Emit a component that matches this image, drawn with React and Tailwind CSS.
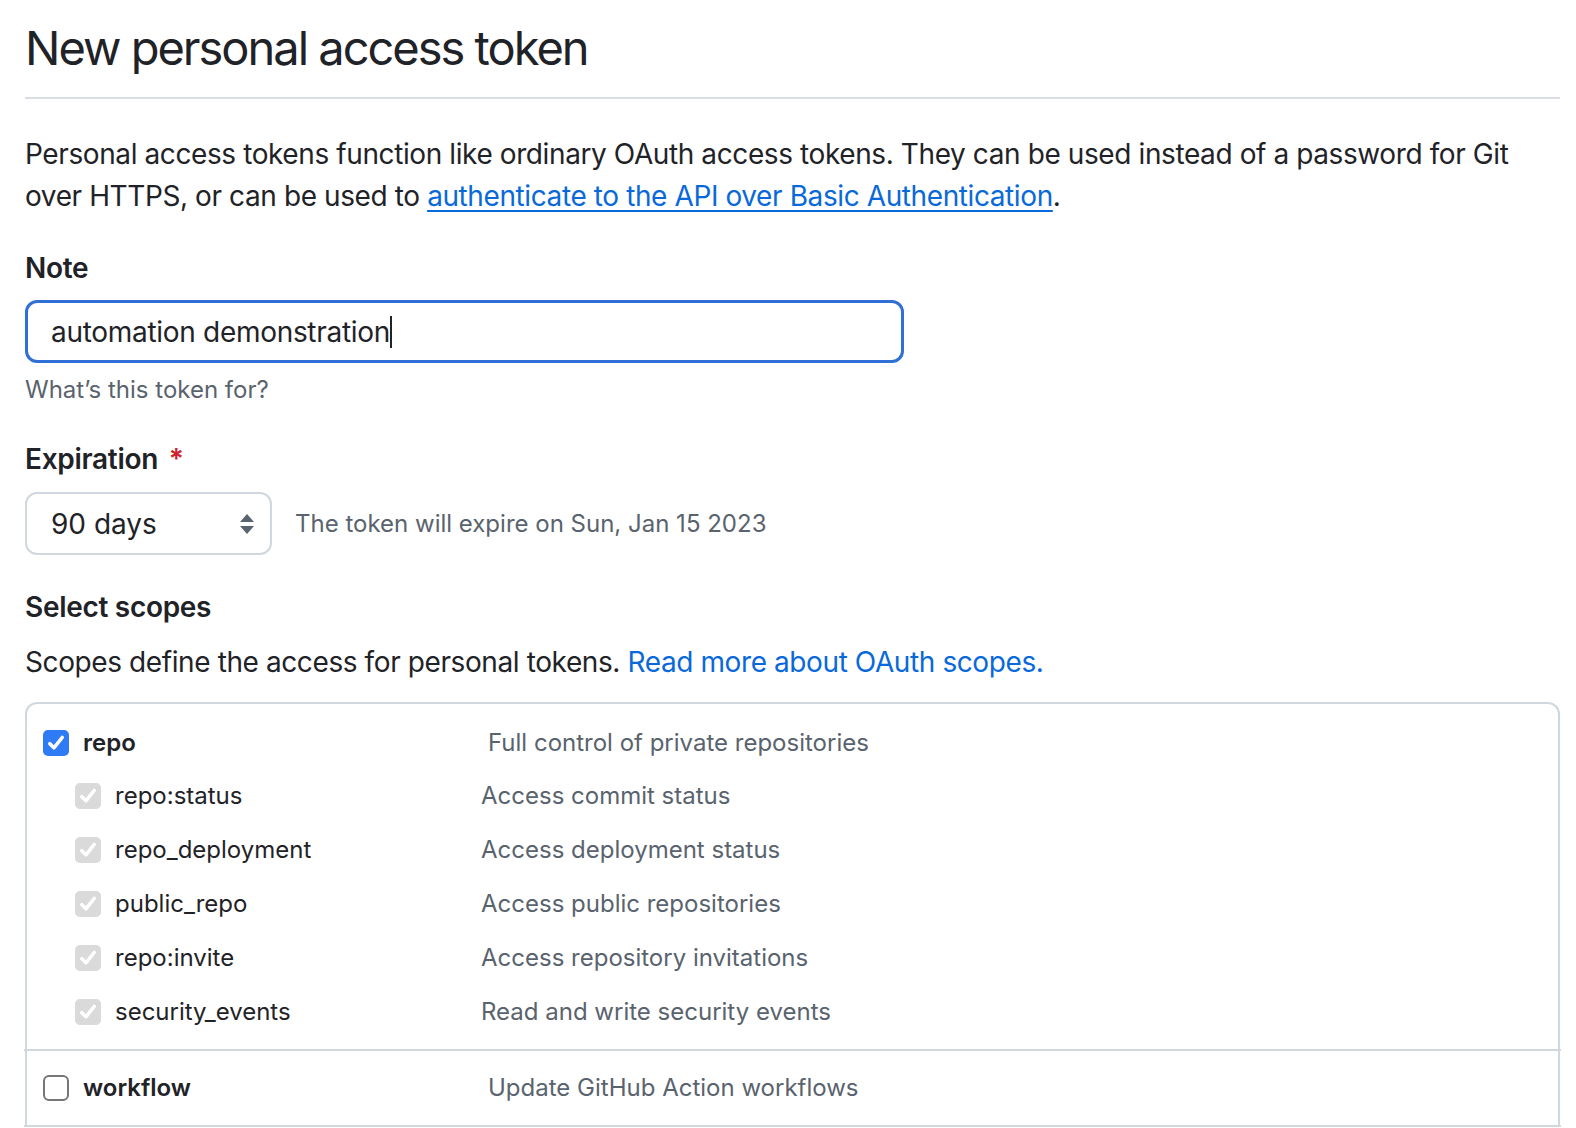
import React from "react";

const scopes = [
  { name: "repo:status", desc: "Access commit status" },
  { name: "repo_deployment", desc: "Access deployment status" },
  { name: "public_repo", desc: "Access public repositories" },
  { name: "repo:invite", desc: "Access repository invitations" },
  { name: "security_events", desc: "Read and write security events" },
];

function CheckMark({ className }) {
  return (
    <svg viewBox="0 0 16 16" className={className} fill="none">
      <path
        d="M3.5 8.5l3 3 6-7.5"
        stroke="currentColor"
        strokeWidth="2.6"
        strokeLinecap="round"
        strokeLinejoin="round"
      />
    </svg>
  );
}

export default function App() {
  return (
    <div
      className="w-full min-h-[1128px] bg-white text-[#1f2328] pl-[25px] pr-[16px] pt-[18px]"
      style={{ fontFamily: "Inter, 'Noto Sans', sans-serif" }}
    >
      <div className="border-b-2 border-[#d8dee4] pb-[19px]">
        <h1 className="text-[47px] leading-[60px] font-normal tracking-[-2px]">
          New personal access token
        </h1>
      </div>

      <p className="mt-[34px] text-[28px] leading-[42px] tracking-[-0.4px]">
        Personal access tokens function like ordinary OAuth access tokens. They can be used instead of a password for Git
        over HTTPS, or can be used to{" "}
        <a href="#" className="text-[#0969da] underline underline-offset-[4px]">
          authenticate to the API over Basic Authentication
        </a>
        .
      </p>

      <div className="mt-[30px] text-[28px] leading-[42px] font-semibold tracking-[-0.3px]">Note</div>
      <div className="mt-[11px] w-[879px] h-[63px] rounded-[12px] border-[3px] border-[#2f6fd6] flex items-center pl-[23px] text-[28px] tracking-[-0.3px]">
        <span>automation demonstration</span>
        <span className="inline-block w-[2px] h-[32px] bg-[#1f2328]" />
      </div>
      <div className="mt-[9px] text-[24px] leading-[36px] text-[#59636e]">What’s this token for?</div>

      <div className="mt-[30px] text-[28px] leading-[42px] font-semibold tracking-[-0.3px]">
        Expiration <span className="text-[#cf222e] ml-[4px]">*</span>
      </div>
      <div className="mt-[12px] flex items-center">
        <div className="w-[247px] h-[63px] rounded-[12px] border-2 border-[#d0d7de] flex items-center justify-between pl-[24px] pr-[16px] text-[28px]">
          <span>90 days</span>
          <svg viewBox="0 0 14 20" className="w-[14px] h-[20px]">
            <path d="M7 0L14 8H0z" fill="#59636e" />
            <path d="M7 20L14 12H0z" fill="#59636e" />
          </svg>
        </div>
        <div className="ml-[23px] text-[24px] text-[#59636e]">The token will expire on Sun, Jan 15 2023</div>
      </div>

      <div className="mt-[31px] text-[28px] leading-[42px] font-semibold tracking-[-0.3px]">Select scopes</div>
      <div className="mt-[13px] text-[28px] leading-[42px] tracking-[-0.4px]">
        Scopes define the access for personal tokens.{" "}
        <a href="#" className="text-[#0969da]">Read more about OAuth scopes.</a>
      </div>

      <div className="mt-[19px] border-2 border-b-0 border-[#d0d7de] rounded-t-[12px]">
        <div className="pt-[18px] pb-[10px]">
          <div className="flex items-center h-[42px] pl-[16px] mb-[5px]">
            <span className="w-[26px] h-[26px] rounded-[5px] bg-[#2f7bf5] flex items-center justify-center text-white">
              <CheckMark className="w-[22px] h-[22px]" />
            </span>
            <span className="ml-[14px] w-[405px] text-[24px] font-semibold">repo</span>
            <span className="text-[24px] text-[#59636e]">Full control of private repositories</span>
          </div>
          {scopes.map((s) => (
            <div key={s.name} className="flex items-center h-[54px] pl-[48px]">
              <span className="w-[26px] h-[26px] rounded-[5px] bg-[#dadada] flex items-center justify-center text-white">
                <CheckMark className="w-[22px] h-[22px]" />
              </span>
              <span className="ml-[14px] w-[366px] text-[24px]">{s.name}</span>
              <span className="text-[24px] text-[#59636e]">{s.desc}</span>
            </div>
          ))}
        </div>
        <div className="border-t-2 border-[#d0d7de] -mx-[3px] h-[76px] flex items-center pl-[19px]">
          <span className="w-[26px] h-[26px] rounded-[6px] border-2 border-[#767676] bg-white" />
          <span className="ml-[14px] w-[405px] text-[24px] font-semibold">workflow</span>
          <span className="text-[24px] text-[#59636e]">Update GitHub Action workflows</span>
        </div>
        <div className="border-t-2 border-[#d0d7de] -mx-[3px]" />
      </div>
    </div>
  );
}
